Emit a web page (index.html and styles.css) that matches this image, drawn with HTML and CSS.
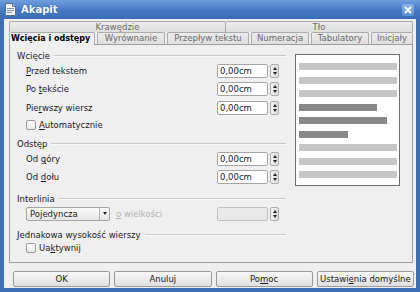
FILE: index.html
```html
<!DOCTYPE html>
<html lang="pl">
<head>
  <meta charset="UTF-8" />
  <title>Akapit</title>
  <link rel="stylesheet" href="styles.css">
</head>
<body>

  <div class="window">
    <div class="titlebar">
      <svg class="app-icon" width="11" height="13" viewBox="0 0 11 13">
        <path d="M0.5 0.5 H7.5 L10.5 3.5 V12.5 H0.5 Z" fill="#f4f6fa" stroke="#5d6f8c"/>
        <path d="M7.5 0.5 V3.5 H10.5" fill="#cfd7e4" stroke="#5d6f8c"/>
        <rect x="2" y="5" width="7" height="1" fill="#7d8fb0"/>
        <rect x="2" y="7" width="7" height="1" fill="#7d8fb0"/>
        <rect x="2" y="9" width="5" height="1" fill="#7d8fb0"/>
      </svg>
      <span class="title">Akapit</span>
      <div class="close">
        <svg width="8" height="8" viewBox="0 0 8 8">
          <path d="M1 1 L7 7 M7 1 L1 7" stroke="#fff" stroke-width="1.8"/>
        </svg>
      </div>
    </div>

    <div class="client">
      <div class="tab-row back">
        <div class="tab">Krawędzie</div>
        <div class="tab">Tło</div>
      </div>
      <div class="tab-row front">
        <div class="tab active">Wcięcia i odstępy</div>
        <div class="tab">Wyrównanie</div>
        <div class="tab">Przepływ tekstu</div>
        <div class="tab">Numeracja</div>
        <div class="tab">Tabulatory</div>
        <div class="tab">Inicjały</div>
      </div>

      <div class="panel">
        <div class="form">
          <div class="section">Wcięcie</div>
          <div class="field-row">
            <span class="label"><u>P</u>rzed tekstem</span>
            <div class="spin"><span class="spin-value">0,00cm</span></div>
            <div class="spin-buttons"><span class="up"></span><span class="down"></span></div>
          </div>
          <div class="field-row">
            <span class="label">Po <u>t</u>ekście</span>
            <div class="spin"><span class="spin-value">0,00cm</span></div>
            <div class="spin-buttons"><span class="up"></span><span class="down"></span></div>
          </div>
          <div class="field-row">
            <span class="label">Pie<u>r</u>wszy wiersz</span>
            <div class="spin"><span class="spin-value">0,00cm</span></div>
            <div class="spin-buttons"><span class="up"></span><span class="down"></span></div>
          </div>
          <div class="check-row">
            <span class="checkbox"></span>
            <span><u>A</u>utomatycznie</span>
          </div>

          <div class="section spaced">Odstęp</div>
          <div class="field-row">
            <span class="label">Od <u>g</u>óry</span>
            <div class="spin"><span class="spin-value">0,00cm</span></div>
            <div class="spin-buttons"><span class="up"></span><span class="down"></span></div>
          </div>
          <div class="field-row">
            <span class="label">Od <u>d</u>ołu</span>
            <div class="spin"><span class="spin-value">0,00cm</span></div>
            <div class="spin-buttons"><span class="up"></span><span class="down"></span></div>
          </div>

          <div class="section spaced">Interlinia</div>
          <div class="field-row">
            <div class="combo">
              <span class="combo-value">Pojedyncza</span>
              <span class="combo-arrow"></span>
            </div>
            <span class="label disabled"><u>o</u> wielkości</span>
            <div class="spin disabled"></div>
            <div class="spin-buttons"><span class="up"></span><span class="down"></span></div>
          </div>

          <div class="section spaced">Jednakowa wysokość wierszy</div>
          <div class="check-row">
            <span class="checkbox"></span>
            <span>Ua<u>k</u>tywnij</span>
          </div>
        </div>

        <div class="preview">
          <div class="bar"></div>
          <div class="bar"></div>
          <div class="bar"></div>
          <div class="bar dark w78"></div>
          <div class="bar dark w88"></div>
          <div class="bar dark w49"></div>
          <div class="bar"></div>
          <div class="bar"></div>
          <div class="bar"></div>
        </div>
      </div>

      <div class="buttons">
        <button>OK</button>
        <button>Anuluj</button>
        <button>Po<u>m</u>oc</button>
        <button>Ustawi<u>e</u>nia domyślne</button>
      </div>
    </div>
  </div>

</body>
</html>
```

FILE: styles.css
```css
body {
  margin: 0;
  font-family: "DejaVu Sans", sans-serif;
  font-size: 8.5px;
  color: #1a1a1a;
}

u {
  text-decoration-thickness: 1px;
  text-underline-offset: 1px;
}

.window {
  width: 420px;
  height: 292px;
  background-color: #3d6fb6;
  display: flex;
  flex-direction: column;
}

/* title bar */

.titlebar {
  height: 19px;
  display: flex;
  align-items: center;
  padding: 0 6px 0 5px;
  background: linear-gradient(#6f9edd, #4479c4 55%, #3a6db5);
}

.app-icon {
  margin-right: 5px;
}

.title {
  flex: 1;
  color: #fff;
  font-weight: bold;
  font-size: 10px;
  text-shadow: 0 0 1px #24508f;
}

.close {
  width: 12px;
  height: 12px;
  display: flex;
  align-items: center;
  justify-content: center;
  background: linear-gradient(#8fb5e8, #5c8fd4);
  border-radius: 2px;
}

/* client area */

.client {
  flex: 1;
  margin: 0 4px 4px 4px;
  background-color: #efefef;
  padding: 2px 3px 0 5px;
  display: flex;
  flex-direction: column;
}

.tab-row {
  display: grid;
}

.tab-row.back {
  grid-template-columns: 217px 1fr;
  height: 11px;
}

.tab-row.front {
  grid-template-columns: 86px 68px 82px 58px 58px 1fr;
  column-gap: 2px;
  height: 12px;
}

.tab {
  background: linear-gradient(#ececec, #dedede);
  border: 1px solid #aaaaaa;
  border-bottom: none;
  border-radius: 2px 2px 0 0;
  color: #6a6a6a;
  text-align: center;
  line-height: 11px;
  font-size: 8.5px;
  white-space: nowrap;
  overflow: hidden;
}

.tab-row.back .tab + .tab {
  border-left: none;
}

.tab.active {
  background: #efefef;
  color: #000;
  font-weight: bold;
  text-align: left;
  padding-left: 1px;
  position: relative;
  z-index: 1;
  margin-bottom: -1px;
  line-height: 12px;
  font-size: 8px;
  overflow: visible;
}

.panel {
  height: 219px;
  box-sizing: border-box;
  border: 1px solid #9d9d9d;
  display: flex;
  align-items: flex-start;
  padding: 5px 12px 0 7px;
}

/* form column */

.form {
  width: 269px;
  display: flex;
  flex-direction: column;
}

.section {
  height: 12px;
  display: flex;
  align-items: center;
  gap: 4px;
}

.section::after {
  content: "";
  flex: 1;
  border-top: 1px solid #c9c9c9;
  border-bottom: 1px solid #fafafa;
}

.section.spaced {
  margin-top: 6px;
}

.field-row {
  height: 18px;
  display: flex;
  align-items: center;
  padding: 0 7px 0 9px;
}

.field-row + .field-row {
  height: 18.5px;
}

.label {
  flex: 1;
}

.label.disabled {
  color: #b2b2b2;
  padding-left: 6px;
}

.spin {
  width: 51px;
  height: 14px;
  box-sizing: border-box;
  border: 1px solid #a5a5a5;
  border-radius: 2px;
  background-color: #fff;
  display: flex;
  align-items: center;
  padding-left: 2px;
}

.spin.disabled {
  background-color: #e9e9e9;
  border-color: #c0c0c0;
}

.spin-buttons {
  width: 9px;
  height: 14px;
  box-sizing: border-box;
  margin-left: 2px;
  border: 1px solid #ababab;
  border-radius: 2px;
  background: linear-gradient(to right, #f4f4f4, #dcdcdc);
  display: flex;
  flex-direction: column;
  align-items: center;
  justify-content: center;
  gap: 2px;
}

.spin-buttons .up {
  width: 0;
  height: 0;
  border-left: 2.5px solid transparent;
  border-right: 2.5px solid transparent;
  border-bottom: 3px solid #222;
}

.spin-buttons .down {
  width: 0;
  height: 0;
  border-left: 2.5px solid transparent;
  border-right: 2.5px solid transparent;
  border-top: 3px solid #222;
}

.combo {
  width: 84px;
  height: 14px;
  box-sizing: border-box;
  border: 1px solid #a5a5a5;
  border-radius: 2px;
  background: linear-gradient(#fafafa, #e6e6e6);
  display: flex;
  align-items: center;
}

.combo-value {
  flex: 1;
  padding-left: 3px;
}

.combo-arrow {
  width: 9px;
  height: 12px;
  border-left: 1px solid #b0b0b0;
  display: flex;
  align-items: center;
  justify-content: center;
}

.combo-arrow::before {
  content: "";
  border-left: 2.5px solid transparent;
  border-right: 2.5px solid transparent;
  border-top: 3px solid #222;
}

.check-row {
  height: 15px;
  display: flex;
  align-items: center;
  gap: 3px;
  padding-left: 9px;
}

.checkbox {
  width: 10px;
  height: 10px;
  box-sizing: border-box;
  border: 1px solid #9a9a9a;
  border-radius: 2px;
  background: linear-gradient(#ffffff, #e8e8e8);
}

/* preview */

.preview {
  width: 105px;
  height: 132px;
  box-sizing: border-box;
  margin: 4px 0 0 9px;
  border: 1px solid #6e6e6e;
  background-color: #fff;
  padding: 8px 2px 0 3px;
  display: flex;
  flex-direction: column;
  gap: 6.5px;
}

.bar {
  height: 7px;
  background-color: #c6c6c6;
}

.bar.dark {
  background-color: #888888;
}

.bar.w78 { width: 78px; }
.bar.w88 { width: 88px; }
.bar.w49 { width: 49px; }

/* bottom buttons */

.buttons {
  display: grid;
  grid-template-columns: repeat(4, 1fr);
  gap: 4px;
  margin: 8px -1px 0 4px;
}

.buttons button {
  height: 16px;
  padding: 0;
  font-family: inherit;
  font-size: 8.5px;
  color: #1a1a1a;
  border: 1px solid #9a9a9a;
  border-radius: 2px;
  background: linear-gradient(#f8f8f8, #e0e0e0);
}
```
